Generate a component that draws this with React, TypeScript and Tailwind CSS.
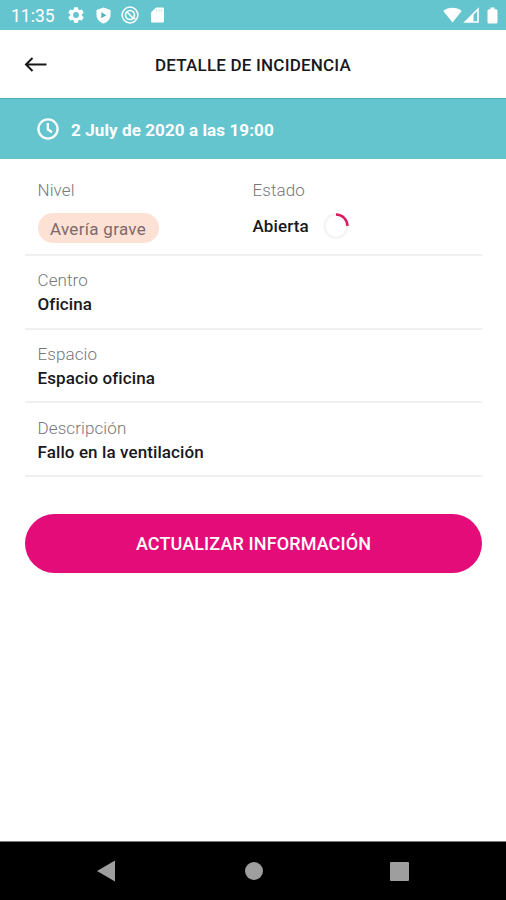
import type { ReactNode } from "react";

function StatusBar() {
  return (
    <div className="flex h-[30px] shrink-0 items-center bg-[#65c5cf] pl-[11px] pr-[8px] text-white">
      <span className="w-[57px] pt-[2px] text-[17.5px] leading-[30px]">11:35</span>
      <svg className="-ml-px h-[18px] w-[18px]" viewBox="1 1 22 22" fill="currentColor">
        <path d="M19.14 12.94c.04-.3.06-.61.06-.94 0-.32-.02-.64-.07-.94l2.03-1.58a.49.49 0 0 0 .12-.61l-1.92-3.32a.488.488 0 0 0-.59-.22l-2.39.96c-.5-.38-1.03-.7-1.62-.94l-.36-2.54a.484.484 0 0 0-.48-.41h-3.84c-.24 0-.43.17-.47.41l-.36 2.54c-.59.24-1.13.57-1.62.94l-2.39-.96c-.22-.08-.47 0-.59.22L2.74 8.87c-.12.21-.08.47.12.61l2.03 1.58c-.05.3-.09.63-.09.94s.02.64.07.94l-2.03 1.58a.49.49 0 0 0-.12.61l1.92 3.32c.12.22.37.29.59.22l2.39-.96c.5.38 1.03.7 1.62.94l.36 2.54c.05.24.24.41.48.41h3.84c.24 0 .44-.17.47-.41l.36-2.54c.59-.24 1.13-.56 1.62-.94l2.39.96c.22.08.47 0 .59-.22l1.92-3.32c.12-.22.07-.47-.12-.61l-2.01-1.58zM12 15.6A3.6 3.6 0 1 1 12 8.4a3.6 3.6 0 0 1 0 7.2z" />
      </svg>
      <svg className="ml-[11px] h-[17px] w-[15px]" viewBox="0 0 15 17">
        <path d="M7.5.5 14.5 3v5c0 4-3 7.2-7 8.5C3.5 15.2.5 12 .5 8V3z" fill="currentColor" />
        <path d="M5.3 5.2v6l5-3z" fill="#4fb2bd" />
      </svg>
      <svg className="ml-[10px] h-[18px] w-[18px]" viewBox="0 0 18 18" fill="none" stroke="currentColor">
        <circle cx="9" cy="9" r="7.9" strokeWidth="1.5" />
        <circle cx="9" cy="9" r="4.5" strokeWidth="1.7" />
        <path d="m5.8 5.8 6.4 6.4M11.5 12.5h3" strokeWidth="1.5" />
      </svg>
      <svg className="ml-[12px] h-[16px] w-[13px]" viewBox="0 0 13 16">
        <path d="M5 .5h7a1 1 0 0 1 1 1v13a1 1 0 0 1-1 1H1a1 1 0 0 1-1-1v-9z" fill="currentColor" />
        <path d="M5.5 2.5v2M8 2.5v2M10.5 2.5v2" stroke="#65c5cf" strokeWidth=".5" />
      </svg>
      <svg className="ml-auto h-[16px] w-[19px]" viewBox="0 0 19 16" fill="currentColor">
        <path d="M.3 4C5.5-.3 13.5-.3 18.7 4L9.5 15.5z" />
      </svg>
      <svg className="ml-[1px] h-[16px] w-[16px]" viewBox="0 0 16 16">
        <path d="M15 2.2V15H2.2z" fill="none" stroke="currentColor" strokeWidth="1.6" />
        <path d="M10.5 6.7V15H2.2z" fill="currentColor" />
      </svg>
      <svg className="ml-[8px] h-[17px] w-[11px]" viewBox="0 0 11 17" fill="currentColor">
        <path d="M3.5.5h4v1.700H9A1.5 1.5 0 0 1 10.500 3.700V15A1.500 1.500 0 0 1 9 16.500H2A1.500 1.500 0 0 1 .5 15V3.700A1.500 1.500 0 0 1 2 2.200h1.500z" />
      </svg>
    </div>
  );
}

function Label({ children }: { children: ReactNode }) {
  return <div className="text-[17px] font-light leading-6 tracking-[0.1px] text-[#77777b]">{children}</div>;
}

function Row({ label, value }: { label: string; value: string }) {
  return (
    <div className="h-[73.6px] border-b-2 border-[#f0f0f1] pl-[12.5px] pt-[12.4px]">
      <Label>{label}</Label>
      <div className="text-[17px] font-medium leading-6 tracking-[0.1px] text-[#18181d]">{value}</div>
    </div>
  );
}

export default function App() {
  return (
    <div className="flex h-[900px] w-[506px] flex-col overflow-hidden bg-white font-['Roboto',sans-serif]">
      <StatusBar />

      <header className="grid h-[68px] shrink-0 grid-cols-[64px_1fr_64px] items-center">
        <button className="pl-[24px]" aria-label="Volver">
          <svg className="h-[16px] w-[23px]" viewBox="0 0 23 16" fill="none" stroke="#18181b" strokeWidth="2">
            <path d="M22.5 8.5H2M8.5 2 2 8.5 8.5 15" />
          </svg>
        </button>
        <h1 className="pt-[3px] text-center text-[17px] font-medium tracking-[0.2px] text-[#18181d]">
          DETALLE DE INCIDENCIA
        </h1>
      </header>

      <div className="flex h-[61px] shrink-0 items-center border-t border-[#4db0ba] bg-[#65c5cf] pl-[37px] text-white">
        <svg className="h-[22px] w-[22px]" viewBox="0 0 22 22" fill="none" stroke="currentColor" strokeWidth="2.3">
          <circle cx="11" cy="11" r="9.6" />
          <path d="M10.8 5v6.3l4.2 3" />
        </svg>
        <span className="ml-[12px] pt-[3px] text-[17px] font-bold tracking-[0.1px]">2 July de 2020 a las 19:00</span>
      </div>

      <main className="flex-1 pl-[25px] pr-[24px]">
        <div className="grid h-[97px] grid-cols-[215px_1fr] border-b-2 border-[#f0f0f1] pl-[12.5px] pt-[19px]">
          <div>
            <Label>Nivel</Label>
            <span className="mt-[11px] flex h-[30px] w-[121px] items-center justify-center rounded-full bg-[#fce1d4] pt-[3px] text-[17px] tracking-[0.3px] text-[#80686a]">
              Avería grave
            </span>
          </div>
          <div>
            <Label>Estado</Label>
            <div className="mt-[11px] flex items-center text-[17px] font-medium leading-[26px] tracking-[0.1px] text-[#18181d]">
              Abierta
              <svg className="ml-[14px] h-[26px] w-[26px]" viewBox="0 0 26 26" fill="none" strokeWidth="2.4">
                <circle cx="13" cy="13" r="11.5" stroke="#f4f4f5" />
                <path d="M13 1.500A11.500 11.500 0 0 1 24.500 13" stroke="#d91b60" />
              </svg>
            </div>
          </div>
        </div>
        <Row label="Centro" value="Oficina" />
        <Row label="Espacio" value="Espacio oficina" />
        <Row label="Descripción" value="Fallo en la ventilación" />

        <button className="mt-[37px] h-[59px] w-full rounded-full bg-[#e30c79] text-[18px] font-medium tracking-[0.12px] text-white">
          ACTUALIZAR INFORMACIÓN
        </button>
      </main>

      <nav className="flex h-[59px] shrink-0 items-center border-t border-[#777] bg-black pl-[97px] text-[#9e9e9e]">
        <svg className="h-[22px] w-[18px]" viewBox="0 0 18 22" fill="currentColor">
          <path d="M18 .5v21L0 11z" />
        </svg>
        <span className="ml-[130px] h-[18px] w-[18px] rounded-full bg-[#9e9e9e]" />
        <span className="ml-[127px] h-[19px] w-[19px] rounded-[1px] bg-[#9e9e9e]" />
      </nav>
    </div>
  );
}
